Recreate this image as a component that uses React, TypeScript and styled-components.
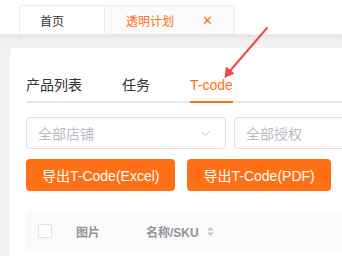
import React from "react";
import styled, { createGlobalStyle } from "styled-components";

const Global = createGlobalStyle`
  html, body { margin: 0; padding: 0; overflow: hidden; background: #fff; }
  body { font-family: "Liberation Sans", "Noto Sans CJK SC", Arial, sans-serif; }
  * { box-sizing: border-box; }
`;

const Page = styled.div`
  position: relative;
  width: 342px;
  height: 256px;
  overflow: hidden;
  display: flex;
  flex-direction: column;
`;

const TabBar = styled.div`
  height: 34px;
  padding: 5px 0 0 19px;
  display: flex;
  align-items: stretch;
  background: #fff;
  flex-shrink: 0;
`;

const PageTab = styled.div<{ $active?: boolean; $w: number; $first?: boolean }>`
  width: ${(p) => p.$w}px;
  height: 29px;
  display: flex;
  align-items: center;
  justify-content: space-between;
  padding: 0 ${(p) => (p.$active ? 21 : 20)}px 0 ${(p) => (p.$active ? 21 : 20)}px;
  font-size: 12px;
  color: ${(p) => (p.$active ? "#ff7016" : "#333")};
  background: ${(p) => (p.$active ? "#fafafa" : "#fff")};
  border: 1px solid #ebebeb;
  border-bottom: none;
  border-left-width: ${(p) => (p.$first ? 1 : 0)}px;
  border-radius: ${(p) => (p.$first ? "4px 0 0 0" : "0 4px 0 0")};
`;

const Close = styled.span`
  color: #ff7016;
  font-size: 13px;
  line-height: 1;
`;

const Main = styled.div`
  flex: 1;
  background: #f2f2f2;
  box-shadow: inset 0 7px 7px -5px rgba(0, 0, 0, 0.08);
  border-top: 1px solid #ececec;
  padding: 13px 0 0 10px;
`;

const Card = styled.div`
  height: 100%;
  background: #fff;
  border-radius: 4px 0 0 0;
  padding: 0 0 0 16px;
  overflow: hidden;
`;

const NavBar = styled.div`
  margin-top: 22px;
  display: flex;
  gap: 40px;
  border-bottom: 2px solid #e8e8e8;
`;

const NavItem = styled.div<{ $active?: boolean }>`
  font-size: 14px;
  line-height: 31px;
  color: ${(p) => (p.$active ? "#ff7016" : "#303133")};
  border-bottom: 2px solid ${(p) => (p.$active ? "#ff7016" : "transparent")};
  margin-bottom: -2px;
`;

const FilterRow = styled.div`
  margin-top: 14px;
  display: flex;
  gap: 8px;
`;

const Select = styled.div`
  flex-shrink: 0;
  width: 200px;
  height: 32px;
  border: 1px solid #dcdfe6;
  border-radius: 4px;
  display: flex;
  align-items: center;
  justify-content: space-between;
  padding: 0 15px 0 11px;
  font-size: 14px;
  color: #b8bcc4;
`;

const ButtonRow = styled.div`
  margin-top: 10px;
  display: flex;
  gap: 12px;
`;

const Button = styled.div`
  height: 32px;
  padding: 0 16px;
  background: #ff7016;
  color: #fff;
  font-size: 14px;
  border-radius: 4px;
  display: flex;
  align-items: center;
  flex-shrink: 0;
`;

const TableHead = styled.div`
  margin-top: 20px;
  height: 40px;
  background: #fafafa;
  display: flex;
  align-items: center;
  font-size: 12px;
  font-weight: bold;
  color: #909399;
`;

const Cell = styled.div<{ $w?: number }>`
  width: ${(p) => (p.$w ? `${p.$w}px` : "auto")};
  flex-shrink: 0;
  display: flex;
  align-items: center;
  gap: 8px;
  padding-left: ${(p) => (p.$w === 50 ? 12 : 0)}px;
`;

const Checkbox = styled.div`
  width: 14px;
  height: 14px;
  border: 1px solid #dcdfe6;
  border-radius: 2px;
  background: #fff;
`;

const Arrow = styled.svg`
  position: absolute;
  left: 0;
  top: 0;
  pointer-events: none;
`;

export default function App() {
  return (
    <Page>
      <Global />
      <TabBar>
        <PageTab $w={86} $first>首页</PageTab>
        <PageTab $w={130} $active>
          <span>透明计划</span>
          <Close>✕</Close>
        </PageTab>
      </TabBar>
      <Main>
        <Card>
          <NavBar>
            <NavItem>产品列表</NavItem>
            <NavItem>任务</NavItem>
            <NavItem $active>T-code</NavItem>
          </NavBar>
          <FilterRow>
            <Select>
              <span>全部店铺</span>
              <svg width="9" height="5" viewBox="0 0 9 5">
                <path d="M0.5 0.5 L4.5 4.5 L8.5 0.5" fill="none" stroke="#c0c4cc" strokeWidth="1" />
              </svg>
            </Select>
            <Select>
              <span>全部授权</span>
            </Select>
          </FilterRow>
          <ButtonRow>
            <Button>导出T-Code(Excel)</Button>
            <Button>导出T-Code(PDF)</Button>
          </ButtonRow>
          <TableHead>
            <Cell $w={50}>
              <Checkbox />
            </Cell>
            <Cell $w={70}>图片</Cell>
            <Cell>
              <span>名称/SKU</span>
              <svg width="7" height="9" viewBox="0 0 7 9">
                <path d="M3.5 0 L7 3.5 L0 3.5 Z" fill="#c0c4cc" />
                <path d="M3.5 9 L7 5.5 L0 5.5 Z" fill="#c0c4cc" />
              </svg>
            </Cell>
          </TableHead>
        </Card>
      </Main>
      <Arrow width="342" height="256" viewBox="0 0 342 256">
        <line x1="267" y1="28" x2="229" y2="72" stroke="#f0494a" strokeWidth="2" strokeLinecap="round" />
        <path d="M224.5 78 L226 66.5 L234.5 73.5 Z" fill="#f0494a" />
      </Arrow>
    </Page>
  );
}
